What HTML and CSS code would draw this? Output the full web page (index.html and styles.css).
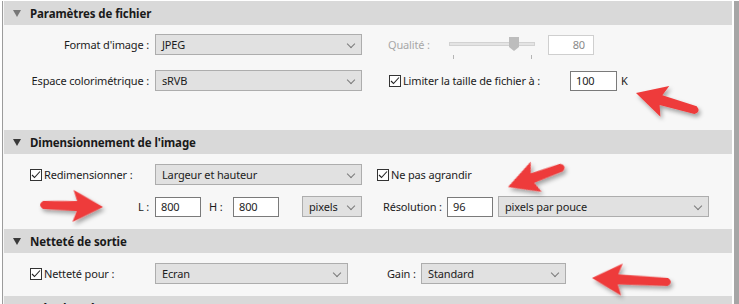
FILE: index.html
```html
<!DOCTYPE html>
<html lang="fr">
<head>
  <meta charset="UTF-8">
  <title>Paramètres d'exportation</title>
  <link rel="stylesheet" href="styles.css">
</head>
<body>

<div class="page">
  <div class="panel">

    <section class="group">
      <div class="group-head"><span class="tri light"></span>Paramètres de fichier</div>
      <div class="group-body body-file">
        <div class="row">
          <span class="lbl">Format d'image :</span>
          <div class="select w-main">JPEG<i class="chev"></i></div>
          <span class="lbl-dim">Qualité :</span>
          <svg class="slider" width="86" height="21" viewBox="0 0 86 21">
            <rect x="0.5" y="8.5" width="85" height="3" fill="#e4e4e4" stroke="#d2d2d2"/>
            <polygon points="60,3 70,3 70,13 65,17 60,13" fill="#bdbdbd"/>
            <line x1="4.5" y1="21" x2="4.5" y2="25" stroke="#b5b5b5"/>
            <line x1="82.5" y1="21" x2="82.5" y2="25" stroke="#b5b5b5"/>
          </svg>
          <div class="field dim num">80</div>
        </div>
        <div class="row">
          <span class="lbl">Espace colorimétrique :</span>
          <div class="select w-main">sRVB<i class="chev"></i></div>
          <label class="check limit"><span class="box"><svg width="12" height="12" viewBox="0 0 12 12"><polyline points="2,6 4.5,8.5 10,2.5" fill="none" stroke="#222" stroke-width="1.1"/></svg></span>Limiter la taille de fichier à :</label>
          <div class="field w-size">100</div>
          <span class="unit">K</span>
        </div>
      </div>
    </section>

    <section class="group">
      <div class="group-head"><span class="tri"></span>Dimensionnement de l'image</div>
      <div class="group-body body-size">
        <div class="row">
          <label class="check first"><span class="box"><svg width="12" height="12" viewBox="0 0 12 12"><polyline points="2,6 4.5,8.5 10,2.5" fill="none" stroke="#222" stroke-width="1.1"/></svg></span>Redimensionner :</label>
          <div class="select w-main">Largeur et hauteur<i class="chev"></i></div>
          <label class="check no-grow"><span class="box"><svg width="12" height="12" viewBox="0 0 12 12"><polyline points="2,6 4.5,8.5 10,2.5" fill="none" stroke="#222" stroke-width="1.1"/></svg></span>Ne pas agrandir</label>
        </div>
        <div class="row">
          <span class="lbl">L :</span>
          <div class="field w-dim">800</div>
          <span class="lbl-h">H :</span>
          <div class="field w-dim">800</div>
          <div class="select w-unit">pixels<i class="chev"></i></div>
          <span class="lbl-res">Résolution :</span>
          <div class="field w-dim">96</div>
          <div class="select w-res">pixels par pouce<i class="chev"></i></div>
        </div>
      </div>
    </section>

    <section class="group">
      <div class="group-head"><span class="tri"></span>Netteté de sortie</div>
      <div class="group-body body-sharp">
        <div class="row">
          <label class="check first"><span class="box"><svg width="12" height="12" viewBox="0 0 12 12"><polyline points="2,6 4.5,8.5 10,2.5" fill="none" stroke="#222" stroke-width="1.1"/></svg></span>Netteté pour :</label>
          <div class="select w-screen">Ecran<i class="chev"></i></div>
          <span class="lbl-gain">Gain :</span>
          <div class="select w-gain">Standard<i class="chev"></i></div>
        </div>
      </div>
    </section>

    <section class="group">
      <div class="group-head"><span class="tri"></span>Métadonnées</div>
    </section>

  </div>
  <div class="scroll"></div>

  <!-- flèches d'annotation -->
  <svg class="arrows" width="739" height="304" viewBox="0 0 739 304">
    <defs>
      <filter id="ombre" x="-30%" y="-30%" width="160%" height="160%">
        <feDropShadow dx="2" dy="3" stdDeviation="2" flood-color="#000" flood-opacity="0.35"/>
      </filter>
    </defs>
    <g fill="#ee3b3b" filter="url(#ombre)">
      <path transform="translate(636 93) rotate(196)" d="M0 0 L-30 -16 L-26 -5 L-62 -4 Q-68 0 -62 4 L-26 5 L-30 16 Z"/>
      <path transform="translate(103 207) rotate(2)" d="M0 0 L-30 -16 L-26 -5 L-60 -4 Q-66 0 -60 4 L-26 5 L-30 16 Z"/>
      <path transform="translate(508 187) rotate(160)" d="M0 0 L-30 -16 L-26 -5 L-57 -4 Q-63 0 -57 4 L-26 5 L-30 16 Z"/>
      <path transform="translate(592 278) rotate(183)" d="M0 0 L-30 -16 L-26 -5 L-76 -4 Q-82 0 -76 4 L-26 5 L-30 16 Z"/>
    </g>
  </svg>
</div>

</body>
</html>
```

FILE: styles.css
```css
body {
  margin: 0;
  background: #fff;
  font-family: "Noto Sans", "Open Sans", sans-serif;
  font-size: 11px;
  letter-spacing: -0.15px;
  color: #1c1c1c;
}
.page {
  position: relative;
  display: flex;
  width: 739px;
  height: 304px;
  overflow: hidden;
  padding-top: 1px;
  box-sizing: border-box;
}
.panel {
  flex: 1;
  margin-left: 2px;
  border-left: 1px solid #9c9c9c;
  padding-left: 1px;
  background: #f7f7f7;
}
.scroll {
  width: 5px;
  margin-left: 2px;
  background: #a6a6a6;
}
.group-head {
  height: 24px;
  display: flex;
  align-items: center;
  background: #d9d9d9;
  font-weight: bold;
  font-size: 11.5px;
  letter-spacing: -0.1px;
  color: #1a1a1a;
}
.tri {
  width: 0;
  height: 0;
  margin: 0 9px 0 9px;
  border-left: 4px solid transparent;
  border-right: 4px solid transparent;
  border-top: 7px solid #3a3a3a;
}
.tri.light {
  border-top-color: #777;
}
.group-body {
  display: flex;
  flex-direction: column;
}
.body-file {
  padding: 9px 0 39px;
  gap: 15px;
}
.body-size {
  padding: 10px 0 12px;
  gap: 11px;
}
.body-sharp {
  padding: 10px 0 12px;
}
.row {
  display: flex;
  align-items: center;
  height: 21px;
}
.lbl {
  width: 145px;
  margin-right: 6px;
  text-align: right;
  white-space: nowrap;
}
.select {
  position: relative;
  height: 21px;
  box-sizing: border-box;
  border: 1px solid #adadad;
  background: #e1e1e1;
  padding-left: 6px;
  line-height: 19px;
  white-space: nowrap;
}
.chev {
  position: absolute;
  right: 7px;
  top: 6px;
  width: 5px;
  height: 5px;
  border-right: 1px solid #7a7a7a;
  border-bottom: 1px solid #7a7a7a;
  transform: rotate(45deg);
}
.w-main { width: 207px; }
.w-unit { width: 60px; margin-left: 23px; }
.w-res { width: 211px; margin-left: 5px; }
.w-screen { width: 193px; }
.w-gain { width: 145px; }
.field {
  height: 20px;
  box-sizing: border-box;
  border: 1px solid #7a7a7a;
  background: #fff;
  padding-left: 5px;
  line-height: 18px;
}
.field.dim {
  border-color: #cfcfcf;
  color: #8a8a8a;
  width: 46px;
  margin-left: 13px;
}
.field.num {
  text-align: right;
  padding-right: 8px;
}
.w-size { width: 47px; }
.w-dim { width: 46px; }
.unit {
  margin-left: 4px;
}
.lbl-dim {
  width: 61px;
  margin-left: 26px;
  color: #a8a8a8;
}
.slider {
  overflow: visible;
}
.check {
  display: flex;
  align-items: center;
  white-space: nowrap;
}
.box {
  width: 12px;
  height: 12px;
  box-sizing: border-box;
  border: 1px solid #333;
  background: #fff;
  margin-right: 2px;
  display: flex;
}
.box svg {
  margin: -1px;
}
.check.first {
  width: 125px;
  padding-left: 26px;
}
.check.limit {
  width: 181px;
  margin-left: 27px;
}
.check.no-grow {
  margin-left: 15px;
}
.lbl-h {
  width: 24px;
  padding-left: 8px;
}
.lbl-res {
  width: 64px;
  margin-left: 21px;
}
.lbl-gain {
  width: 34px;
  margin-left: 39px;
}
.arrows {
  position: absolute;
  left: 0;
  top: 0;
  pointer-events: none;
}
```
